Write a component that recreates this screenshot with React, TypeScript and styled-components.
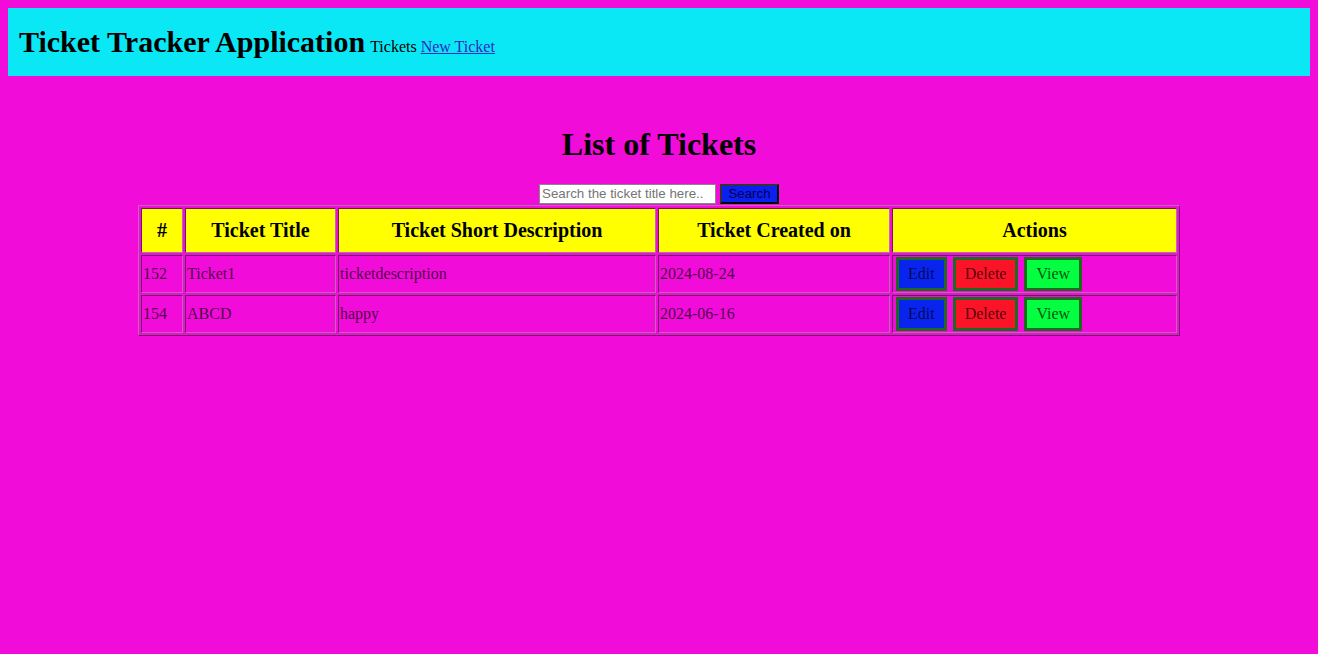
import React from "react";
import styled, { createGlobalStyle } from "styled-components";

const Global = createGlobalStyle`
  html, body { background: #f10cd9; }
  body {
    margin: 8px;
    font-family: "Liberation Serif", "Times New Roman", serif;
    font-size: 16px;
    color: #000;
  }
`;

const Header = styled.header`
  background: #0be8f5;
  height: 68px;
  padding: 17px 11px 0;
  display: flex;
  align-items: baseline;
  box-sizing: border-box;
  gap: 4px;
`;

const Brand = styled.h1`
  margin: 0;
  font-size: 30px;
  font-weight: bold;
  line-height: 34px;
`;

const NavText = styled.span`
  font-size: 16px;
  margin-left: 1px;
`;

const NavLink = styled.a`
  font-size: 16px;
  color: #2a2ac0;
  text-decoration: underline;
`;

const Main = styled.main`
  display: flex;
  flex-direction: column;
  align-items: center;
  padding-top: 50px;
`;

const Title = styled.h2`
  margin: 0 0 20px;
  font-size: 32px;
  font-weight: bold;
  line-height: 37px;
`;

const SearchBar = styled.div`
  display: flex;
  align-items: center;
  gap: 4px;
  height: 21px;
`;

const SearchInput = styled.input`
  width: 177px;
  height: 20px;
  box-sizing: border-box;
  border: 1px solid #888;
  padding: 1px 2px;
  font-family: "Liberation Sans", Arial, sans-serif;
  font-size: 13.33px;
  background: #fff;
  &::placeholder { color: #757575; }
`;

const SearchButton = styled.button`
  width: 59px;
  height: 20px;
  box-sizing: border-box;
  background: #0b1ff0;
  border: 2px solid #111;
  border-color: #333 #000 #000 #333;
  font-family: "Liberation Sans", Arial, sans-serif;
  font-size: 13.33px;
  color: rgba(0, 0, 50, 0.9);
  padding: 0;
`;

const Table = styled.table`
  width: 80%;
  border: 1px solid;
  border-color: #b86bb0 #6a1a64 #6a1a64 #b86bb0;
  border-spacing: 2px;
  table-layout: fixed;
  margin-top: 1px;
`;

const Th = styled.th<{ $w: number }>`
  width: ${(p) => p.$w}px;
  box-sizing: border-box;
  background: #ffff00;
  border: 1px solid;
  border-color: #6a1a64 #b86bb0 #b86bb0 #6a1a64;
  font-size: 20px;
  font-weight: bold;
  height: 45px;
  padding: 0 1px;
  text-align: center;
`;

const Td = styled.td`
  border: 1px solid;
  border-color: #6a1a64 #b86bb0 #b86bb0 #6a1a64;
  height: 38px;
  box-sizing: border-box;
  padding: 1px;
  font-size: 16px;
  color: rgba(0, 0, 0, 0.7);
  vertical-align: middle;
`;

const Actions = styled.div`
  display: flex;
  gap: 6px;
  align-items: center;
  padding-left: 2px;
`;

const ActionButton = styled.button<{ $bg: string }>`
  background: ${(p) => p.$bg};
  border: 3px solid #1e6a1e;
  height: 34px;
  padding: 0 9px;
  font-family: "Liberation Serif", "Times New Roman", serif;
  font-size: 16px;
  color: rgba(0, 0, 0, 0.7);
  cursor: pointer;
`;

const tickets = [
  { id: 152, title: "Ticket1", desc: "ticketdescription", created: "2024-08-24" },
  { id: 154, title: "ABCD", desc: "happy", created: "2024-06-16" },
];

const columns: [string, number][] = [
  ["#", 42],
  ["Ticket Title", 151],
  ["Ticket Short Description", 318],
  ["Ticket Created on", 232],
  ["Actions", 285],
];

export default function App() {
  return (
    <>
      <Global />
      <Header>
        <Brand>Ticket Tracker Application</Brand>
        <NavText>Tickets</NavText>
        <NavLink href="#">New Ticket</NavLink>
      </Header>
      <Main>
        <Title>List of Tickets</Title>
        <SearchBar>
          <SearchInput placeholder="Search the ticket title here.." />
          <SearchButton>Search</SearchButton>
        </SearchBar>
        <Table>
          <thead>
            <tr>
              {columns.map(([c, w]) => (
                <Th key={c} $w={w}>
                  {c}
                </Th>
              ))}
            </tr>
          </thead>
          <tbody>
            {tickets.map((t) => (
              <tr key={t.id}>
                <Td>{t.id}</Td>
                <Td>{t.title}</Td>
                <Td>{t.desc}</Td>
                <Td>{t.created}</Td>
                <Td>
                  <Actions>
                    <ActionButton $bg="#0a24f0">Edit</ActionButton>
                    <ActionButton $bg="#fb1428">Delete</ActionButton>
                    <ActionButton $bg="#04ff40">View</ActionButton>
                  </Actions>
                </Td>
              </tr>
            ))}
          </tbody>
        </Table>
      </Main>
    </>
  );
}
